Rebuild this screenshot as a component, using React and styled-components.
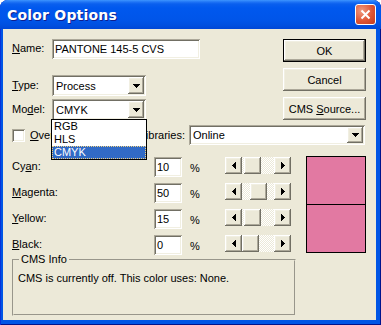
import React from 'react'
import styled, {createGlobalStyle, css} from 'styled-components'

const GlobalStyle = createGlobalStyle`
  html, body {
    margin: 0;
    padding: 0;
    background: #ffffff;
  }
  body {
    font-family: "Liberation Sans", Arial, sans-serif;
    font-size: 11px;
    color: #000000;
  }
  * {
    box-sizing: border-box;
  }
`

// classic 3D edges
const raised = css`
  background-color: #ece9d8;
  box-shadow:
    inset -1px -1px 0 #716f64,
    inset 1px 1px 0 #ffffff,
    inset -2px -2px 0 #aca899,
    inset 2px 2px 0 #f1efe2;
`

const sunken = css`
  background-color: #ffffff;
  box-shadow:
    inset 1px 1px 0 #aca899,
    inset -1px -1px 0 #ffffff,
    inset 2px 2px 0 #716f64,
    inset -2px -2px 0 #f1efe2;
`

const WindowStl = styled.div`
  width: 381px;
  height: 325px;
  display: flex;
  flex-direction: column;
  background: #0055e5;
  border-radius: 8px 8px 0 0;
  overflow: hidden;
  box-shadow: inset 1px 0 #0831d9, inset -1px 0 #00138c, inset 0 -1px #00138c;
`

const TitleBarStl = styled.div`
  height: 29px;
  flex: none;
  display: flex;
  align-items: center;
  justify-content: space-between;
  padding: 0 5px 0 7px;
  background: linear-gradient(to bottom,
    #3d95ff 0px, #1f74f5 2px, #0a5fee 4px, #0058ee 8px,
    #0055e9 20px, #0050e0 25px, #0047d6 29px);
`

const TitleStl = styled.span`
  color: #ffffff;
  font-family: "DejaVu Sans", sans-serif;
  font-weight: bold;
  font-size: 14px;
  letter-spacing: 0.2px;
  text-shadow: 1px 1px #0f1f8f;
`

const CloseBtnStl = styled.div`
  width: 21px;
  height: 21px;
  border: 1px solid #ffffff;
  border-radius: 3px;
  background: radial-gradient(circle at 30% 30%, #f09a80 0%, #df5535 55%, #c23b1c 100%);
  display: flex;
  align-items: center;
  justify-content: center;
`

const ClientStl = styled.div`
  flex: 1;
  margin: 0 5px 5px 3px;
  padding: 10px 10px 0 9px;
  background: #ece9d8;
  display: flex;
  flex-direction: column;
`

const TopSectionStl = styled.div`
  display: flex;
  justify-content: space-between;
  align-items: flex-start;
`

const FormStl = styled.div`
  display: flex;
  flex-direction: column;
`

const FieldRowStl = styled.div`
  display: flex;
  align-items: center;
  margin-top: ${p => p.$offset || 0}px;
`

const LabelStl = styled.span`
  width: ${p => p.$width || 40}px;
  flex: none;
  padding-bottom: ${p => p.$lift || 0}px;
`

const TextBoxStl = styled.div`
  ${sunken};
  width: ${p => p.$width}px;
  height: 20px;
  padding: 0 3px;
  display: flex;
  align-items: center;
  white-space: nowrap;
`

const ComboStl = styled.div`
  ${sunken};
  position: relative;
  width: ${p => p.$width}px;
  height: ${p => p.$height || 21}px;
  padding: 2px;
  display: flex;
  align-items: stretch;
  margin-right: ${p => p.$endGap || 0}px;
`

const ComboTextStl = styled.div`
  flex: 1;
  padding-left: 2px;
  display: flex;
  align-items: center;
`

const ComboBtnStl = styled.div`
  ${raised};
  width: 16px;
  flex: none;
  display: flex;
  align-items: center;
  justify-content: center;
`

const DropListStl = styled.div`
  position: absolute;
  left: -1px;
  top: calc(100% - 1px);
  width: 96px;
  background: #ffffff;
  border: 1px solid #000000;
  z-index: 2;
`

const DropItemStl = styled.div`
  height: 13px;
  line-height: 13px;
  padding-left: 2px;
  ${p => p.$selected && css`
    background: #316ac5;
    color: #ffffff;
    outline: 1px dotted #f0d080;
    outline-offset: -1px;
  `}
`

const ButtonColStl = styled.div`
  display: flex;
  flex-direction: column;
  gap: 6px;
`

const ButtonStl = styled.div`
  ${raised};
  width: 83px;
  height: 23px;
  display: flex;
  align-items: center;
  justify-content: center;
  ${p => p.$default && css`
    border: 1px solid #000000;
  `}
`

const CheckRowStl = styled.div`
  display: flex;
  align-items: center;
  height: 20px;
  margin-top: 5px;
`

const CheckboxStl = styled.div`
  ${sunken};
  width: 13px;
  height: 13px;
  flex: none;
`

const CheckLabelStl = styled.span`
  margin-left: 5px;
`

const LibLabelStl = styled.span`
  margin-left: auto;
  margin-right: 4px;
`

const ColorSectionStl = styled.div`
  display: flex;
  align-items: flex-start;
  margin-top: 11px;
`

const ColorGridStl = styled.div`
  display: grid;
  grid-template-columns: 142px 36px 35px 66px;
  grid-auto-rows: 20px;
  row-gap: 6px;
  padding-top: 1px;
  align-items: start;
`

const RowLabelStl = styled.span`
  line-height: 19px;
`

const PercentStl = styled.span`
  line-height: 22px;
`

const ScrollBarStl = styled.div`
  display: flex;
  width: 66px;
  height: 17px;
`

const ScrollBtnStl = styled.div`
  ${raised};
  width: 17px;
  height: 17px;
  flex: none;
  display: flex;
  align-items: center;
  justify-content: center;
`

const TrackStl = styled.div`
  flex: 1;
  display: flex;
  background: repeating-conic-gradient(#ffffff 0 25%, #ece9d8 0 50%) 0 0 / 2px 2px;
`

const ThumbStl = styled.div`
  ${raised};
  width: 17px;
  height: 17px;
  flex: none;
`

const SwatchStl = styled.div`
  margin-left: auto;
  width: 60px;
  height: 97px;
  border: 1px solid #000000;
  display: flex;
  flex-direction: column;
`

const SwatchCellStl = styled.div`
  flex: 1;
  background: ${p => p.$color};
  & + & {
    border-top: 1px solid #000000;
  }
`

const GroupStl = styled.fieldset`
  margin: -2px 0 0 0;
  width: 284px;
  height: 63px;
  padding: 6px 4px 0 4px;
  border: 2px groove #ece9d8;
  min-inline-size: 0;
`

const LegendStl = styled.legend`
  padding: 0 2px;
  margin-left: 1px;
  line-height: 13px;
`

const GroupTextStl = styled.div`
  line-height: 13px;
`

const Arrow = ({dir}) => {
  const rects = {
    down: [[0, 0, 7, 1], [1, 1, 5, 1], [2, 2, 3, 1], [3, 3, 1, 1]],
    left: [[0, 3, 1, 1], [1, 2, 1, 3], [2, 1, 1, 5], [3, 0, 1, 7]],
    right: [[3, 3, 1, 1], [2, 2, 1, 3], [1, 1, 1, 5], [0, 0, 1, 7]],
  }[dir]
  const w = dir === 'down' ? 7 : 4
  const h = dir === 'down' ? 4 : 7
  return (
    <svg width={w} height={h} viewBox={`0 0 ${w} ${h}`} shapeRendering="crispEdges">
      {rects.map((r, i) => <rect key={i} x={r[0]} y={r[1]} width={r[2]} height={r[3]} fill="#000" />)}
    </svg>
  )
}

const Combo = ({width, height, value, endGap, children}) => (
  <ComboStl $width={width} $height={height} $endGap={endGap}>
    <ComboTextStl>{value}</ComboTextStl>
    <ComboBtnStl><Arrow dir="down" /></ComboBtnStl>
    {children}
  </ComboStl>
)

const ScrollBar = ({value}) => (
  <ScrollBarStl>
    <ScrollBtnStl><Arrow dir="left" /></ScrollBtnStl>
    <TrackStl>
      <ThumbStl style={{marginLeft: Math.round(15 * value / 100)}} />
    </TrackStl>
    <ScrollBtnStl><Arrow dir="right" /></ScrollBtnStl>
  </ScrollBarStl>
)

const colorRows = [
  {label: <>Cy<u>a</u>n:</>, value: 10},
  {label: <><u>M</u>agenta:</>, value: 50},
  {label: <><u>Y</u>ellow:</>, value: 15},
  {label: <><u>B</u>lack:</>, value: 0},
]

const models = ['RGB', 'HLS', 'CMYK']

export default function App() {
  return (
    <>
      <GlobalStyle />
      <WindowStl>
        <TitleBarStl>
          <TitleStl>Color Options</TitleStl>
          <CloseBtnStl>
            <svg width="11" height="11" viewBox="0 0 11 11">
              <path d="M1.5 1.5 L9.5 9.5 M9.5 1.5 L1.5 9.5" stroke="#fff" strokeWidth="2" />
            </svg>
          </CloseBtnStl>
        </TitleBarStl>

        <ClientStl>
          <TopSectionStl>
            <FormStl>
              <FieldRowStl>
                <LabelStl $lift={3}><u>N</u>ame:</LabelStl>
                <TextBoxStl $width={148}>PANTONE 145-5 CVS</TextBoxStl>
              </FieldRowStl>
              <FieldRowStl $offset={16}>
                <LabelStl $lift={1}><u>T</u>ype:</LabelStl>
                <Combo width={94} value="Process" />
              </FieldRowStl>
              <FieldRowStl $offset={3}>
                <LabelStl $lift={1}>Mo<u>d</u>el:</LabelStl>
                <Combo width={94} value="CMYK">
                  <DropListStl>
                    {models.map(m => (
                      <DropItemStl key={m} $selected={m === 'CMYK'}>{m}</DropItemStl>
                    ))}
                  </DropListStl>
                </Combo>
              </FieldRowStl>
            </FormStl>

            <ButtonColStl>
              <ButtonStl $default><span>OK</span></ButtonStl>
              <ButtonStl><span>Cancel</span></ButtonStl>
              <ButtonStl><span>CMS <u>S</u>ource...</span></ButtonStl>
            </ButtonColStl>
          </TopSectionStl>

          <CheckRowStl>
            <CheckboxStl />
            <CheckLabelStl><u>O</u>verprint</CheckLabelStl>
            <LibLabelStl>Color Libraries:</LibLabelStl>
            <Combo width={176} height={20} value="Online" endGap={1} />
          </CheckRowStl>

          <ColorSectionStl>
            <ColorGridStl>
              {colorRows.map((r, i) => (
                <React.Fragment key={i}>
                  <RowLabelStl>{r.label}</RowLabelStl>
                  <TextBoxStl $width={28}>{r.value}</TextBoxStl>
                  <PercentStl>%</PercentStl>
                  <ScrollBar value={r.value} />
                </React.Fragment>
              ))}
            </ColorGridStl>
            <SwatchStl>
              <SwatchCellStl $color="#e279a2" />
              <SwatchCellStl $color="#e279a2" />
            </SwatchStl>
          </ColorSectionStl>

          <GroupStl>
            <LegendStl>CMS Info</LegendStl>
            <GroupTextStl>CMS is currently off. This color uses: None.</GroupTextStl>
          </GroupStl>
        </ClientStl>
      </WindowStl>
    </>
  )
}
